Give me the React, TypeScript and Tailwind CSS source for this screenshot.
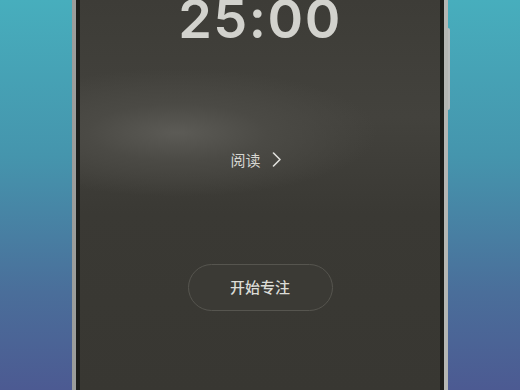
export default function App() {
  return (
    <div className="relative h-[390px] w-[520px] overflow-hidden bg-[linear-gradient(180deg,#47aebd_0%,#4595ad_40%,#4a6e9a_75%,#4c5a92_100%)]">
      <div className="mx-auto flex h-full w-[376px] bg-[linear-gradient(90deg,#9a9c9a,#d4d6d4_40%,#b4b6b3)] px-[4px]">
        <div className="flex h-full flex-1 bg-[#1d1e1b] px-[4px]">
          <div
            className="flex h-full flex-1 flex-col items-center bg-[#3a3934] bg-[radial-gradient(ellipse_200px_64px_at_27%_34%,#5c5b56_0%,#4b4a45_45%,rgba(58,57,52,0)_100%),linear-gradient(180deg,#3d3c37_0%,#43423d_30%,#3a3934_55%,#383732_100%)]"
            style={{ fontFamily: '"Noto Sans CJK SC", "Noto Sans", sans-serif' }}
          >
            <div
              className="mt-[-8px] text-[54px] font-semibold leading-none tracking-[1.5px] text-[#d2d2cd]"
              style={{ fontFamily: "Inter, sans-serif" }}
            >
              25:00
            </div>

            <div className="mt-[106px] flex items-center gap-[11px] pr-[8px] text-[15px] leading-none text-[#d6d6d1]">
              <span>阅读</span>
              <svg width="10" height="15" viewBox="0 0 10 15" fill="none">
                <path d="M1.5 1 L8 7.5 L1.5 14" stroke="#e0e0dc" strokeWidth="1.6" strokeLinecap="round" strokeLinejoin="round" />
              </svg>
            </div>

            <button
              type="button"
              className="mt-[97px] flex h-[47px] w-[145px] items-center justify-center rounded-full border border-[#56554f] bg-[#3b3a35] text-[15px] font-medium text-[#dcdcd7]"
            >
              开始专注
            </button>
          </div>
        </div>
      </div>
      {/* side buttons */}
      <div className="absolute left-[448px] top-[28px] h-[82px] w-[2px] rounded-r bg-[#b9bcbc]" />
    </div>
  );
}
